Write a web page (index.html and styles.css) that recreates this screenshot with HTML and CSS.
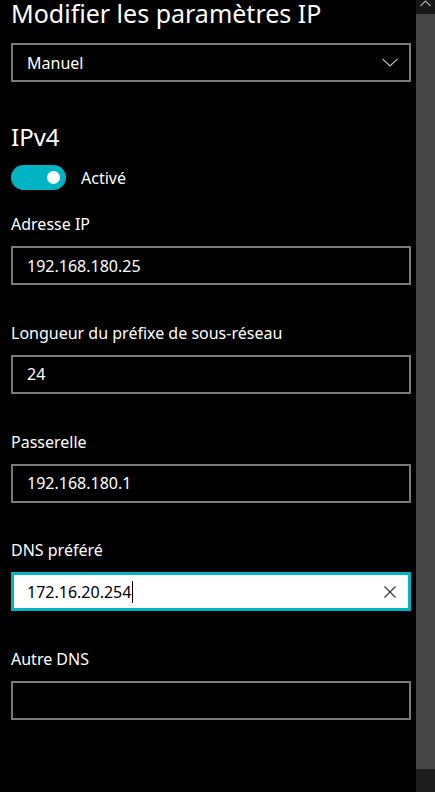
FILE: index.html
```html
<!DOCTYPE html>
<html lang="fr">
<head>
<meta charset="utf-8">
<title>Modifier les paramètres IP</title>
<link rel="stylesheet" href="styles.css">
</head>
<body>
<div class="window">
  <main class="content">
    <h1 class="title">Modifier les paramètres IP</h1>
    <div class="select">
      <span class="select-value">Manuel</span>
      <svg class="chevron" width="16" height="9" viewBox="0 0 16 9"><path d="M0.5 0.8 L8 8 L15.5 0.8" fill="none" stroke="#c8c8c8" stroke-width="1.1"/></svg>
    </div>
    <h2 class="section">IPv4</h2>
    <div class="toggle-row">
      <span class="toggle"><span class="knob"></span></span>
      <span class="toggle-label">Activé</span>
    </div>
    <div class="field">
      <div class="label">Adresse IP</div>
      <div class="input"><span class="value">192.168.180.25</span></div>
    </div>
    <div class="field">
      <div class="label">Longueur du préfixe de sous-réseau</div>
      <div class="input"><span class="value">24</span></div>
    </div>
    <div class="field">
      <div class="label">Passerelle</div>
      <div class="input"><span class="value">192.168.180.1</span></div>
    </div>
    <div class="field">
      <div class="label">DNS préféré</div>
      <div class="input focused">
        <span class="value">172.16.20.254</span><span class="caret"></span>
        <svg class="clear" width="12" height="12" viewBox="0 0 12 12"><path d="M0.5 0.5 L11.5 11.5 M11.5 0.5 L0.5 11.5" fill="none" stroke="#333" stroke-width="1.1"/></svg>
      </div>
    </div>
    <div class="field">
      <div class="label">Autre DNS</div>
      <div class="input"></div>
    </div>
  </main>
  <div class="scrollbar">
    <div class="sb-up"><svg width="11" height="7" viewBox="0 0 11 7"><path d="M0.5 6 L5.5 1 L10.5 6" fill="none" stroke="#a8a8a8" stroke-width="1.1"/></svg></div>
    <div class="sb-thumb"></div>
    <div class="sb-track"></div>
  </div>
</div>
</body>
</html>
```

FILE: styles.css
```css
html, body {
  margin: 0;
  padding: 0;
  background: #000;
}

.window {
  display: flex;
  width: 435px;
  height: 792px;
  overflow: hidden;
  background: #000;
  color: #fff;
  font-family: "Noto Sans", "Open Sans", sans-serif;
}

.content {
  width: 416px;
  box-sizing: border-box;
  padding: 0 5px 0 11px;
  display: flex;
  flex-direction: column;
}

.title {
  margin: 0;
  font-size: 25px;
  font-weight: 400;
  line-height: 26px;
  white-space: nowrap;
}

.select {
  margin-top: 17px;
  height: 39px;
  box-sizing: border-box;
  border: 2px solid #7a7a7a;
  display: flex;
  align-items: center;
  justify-content: space-between;
  padding: 0 11px 0 14px;
  font-size: 16px;
}

.chevron {
  display: block;
}

.section {
  margin: 40px 0 0;
  font-size: 24px;
  font-weight: 400;
  line-height: 30px;
}

.toggle-row {
  margin-top: 13px;
  display: flex;
  align-items: center;
  gap: 15px;
  height: 25px;
}

.toggle {
  width: 55px;
  height: 25px;
  border-radius: 13px;
  background: #00b4c3;
  display: flex;
  align-items: center;
  justify-content: flex-end;
  padding-right: 6px;
  box-sizing: border-box;
}

.knob {
  width: 13px;
  height: 13px;
  border-radius: 50%;
  background: #fff;
}

.toggle-label {
  font-size: 16px;
  line-height: 22px;
}

.field {
  display: flex;
  flex-direction: column;
  margin-top: 36.75px;
}

.toggle-row + .field {
  margin-top: 23px;
}

.label {
  font-size: 16px;
  line-height: 22px;
  white-space: nowrap;
}

.input {
  margin-top: 11px;
  height: 39px;
  box-sizing: border-box;
  border: 2px solid #7a7a7a;
  padding: 0 12px 0 14px;
  display: flex;
  align-items: center;
  font-size: 16px;
  color: #fff;
}

.input.focused {
  border: 3px solid #00b4c3;
  background: #fff;
  color: #000;
  padding-left: 13px;
  padding-right: 12px;
}

.caret {
  width: 1px;
  height: 22px;
  background: #000;
  margin-left: 1px;
}

.clear {
  margin-left: auto;
  display: block;
}

.scrollbar {
  width: 19px;
  display: flex;
  flex-direction: column;
  background: #1c1c1c;
}

.sb-up {
  height: 14px;
  background: #171717;
  display: flex;
  justify-content: center;
}

.sb-up svg {
  display: block;
}

.sb-thumb {
  flex: 1;
  background: #454545;
}

.sb-track {
  height: 23px;
  background: #1d1d1d;
}
```
